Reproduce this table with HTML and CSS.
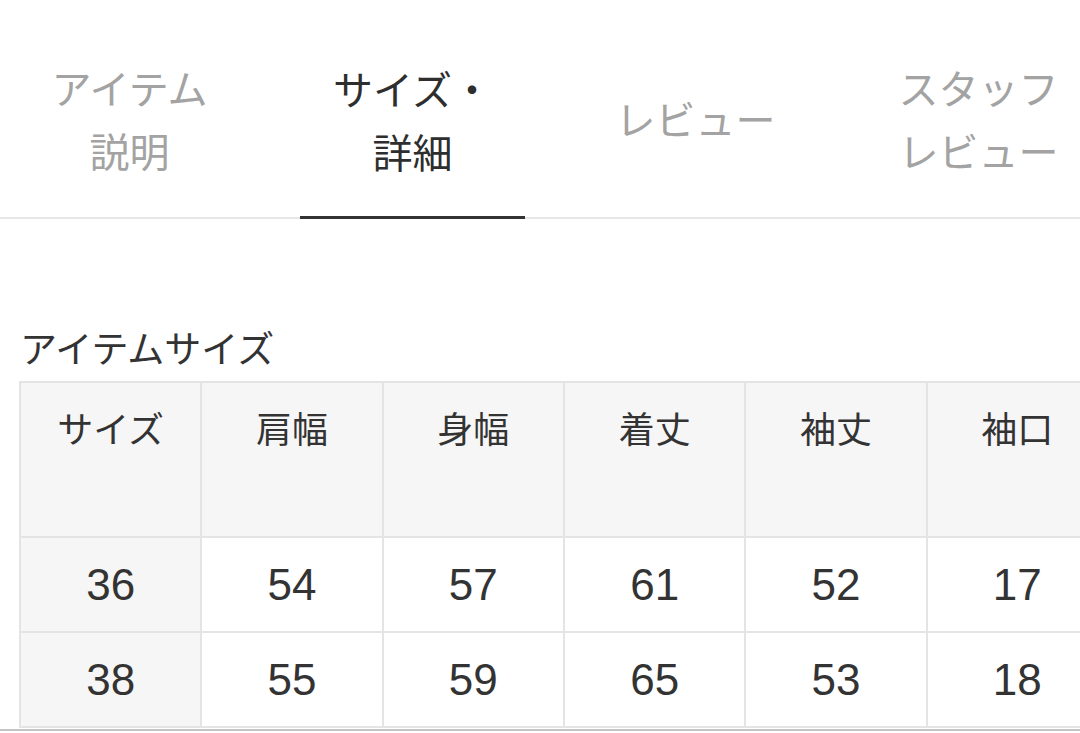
FILE: index.html
```html
<!DOCTYPE html>
<html lang="ja">
<head>
<meta charset="utf-8">
<link rel="stylesheet" href="styles.css">
</head>
<body>
<div class="page">
  <nav class="tabs">
    <div class="tab">アイテム<br>説明</div>
    <div class="tab active">サイズ・<br>詳細</div>
    <div class="tab">レビュー</div>
    <div class="tab">スタッフ<br>レビュー</div>
  </nav>
  <h2 class="title">アイテムサイズ</h2>
  <table class="size-table">
    <thead>
      <tr><th>サイズ</th><th>肩幅</th><th>身幅</th><th>着丈</th><th>袖丈</th><th>袖口</th></tr>
    </thead>
    <tbody>
      <tr><td class="size">36</td><td>54</td><td>57</td><td>61</td><td>52</td><td>17</td></tr>
      <tr><td class="size">38</td><td>55</td><td>59</td><td>65</td><td>53</td><td>18</td></tr>
    </tbody>
  </table>
  <div class="bottom-line"></div>
</div>
</body>
</html>
```

FILE: styles.css
```css
html, body {
  margin: 0;
  padding: 0;
  background: #fff;
}
body {
  width: 1080px;
  height: 733px;
  overflow: hidden;
  font-family: "Noto Sans CJK JP", "Liberation Sans", sans-serif;
  color: #333;
}
.page {
  width: 1080px;
  overflow: hidden;
}
.tabs {
  display: flex;
  gap: 58px;
  padding-left: 17px;
  height: 217px;
  border-bottom: 2px solid #e6e6e6;
}
.tab {
  flex: 0 0 225px;
  box-sizing: border-box;
  height: 217px;
  padding-top: 20px;
  display: flex;
  align-items: center;
  justify-content: center;
  text-align: center;
  font-size: 40px;
  line-height: 63px;
  color: #a3a3a3;
  white-space: nowrap;
}
.tab.active {
  color: #2e2e2e;
  height: 219px;
  border-bottom: 3px solid #333;
  padding-top: 23px;
}
.title {
  margin: 105px 0 11px 20px;
  font-size: 37px;
  line-height: 46px;
  font-weight: 400;
  color: #333;
}
.size-table {
  border-collapse: collapse;
  table-layout: fixed;
  width: 1090px;
  margin-left: 19px;
}
.size-table th,
.size-table td {
  border: 2px solid #e4e4e4;
  text-align: center;
  padding: 0;
}
.size-table th {
  height: 155px;
  vertical-align: top;
  padding-top: 22px;
  box-sizing: border-box;
  background: #f6f6f6;
  font-size: 36px;
  line-height: 44px;
  font-weight: 400;
  color: #333;
}
.size-table td {
  height: 93px;
  font-family: "Liberation Sans", "Noto Sans CJK JP", sans-serif;
  font-size: 44px;
  color: #333;
  background: #fff;
}
.size-table td.size {
  background: #f6f6f6;
}
.bottom-line {
  margin-top: 1px;
  border-top: 2px solid #c4c4c4;
}
```
